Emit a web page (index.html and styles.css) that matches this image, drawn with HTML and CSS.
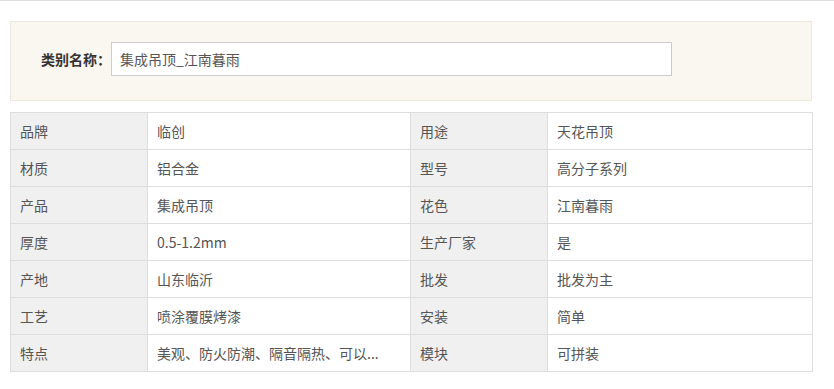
FILE: index.html
```html
<!DOCTYPE html>
<html lang="zh">
<head>
<meta charset="utf-8">
<link rel="stylesheet" href="styles.css">
</head>
<body>
<div class="topline"></div>
<div class="wrap">
  <div class="panel">
    <span class="panel-label">类别名称：</span>
    <div class="panel-input">集成吊顶_江南暮雨</div>
  </div>
  <table class="attrs">
    <colgroup>
      <col class="c-label"><col class="c-value"><col class="c-label"><col class="c-value2">
    </colgroup>
    <tr><td class="k">品牌</td><td>临创</td><td class="k">用途</td><td>天花吊顶</td></tr>
    <tr><td class="k">材质</td><td>铝合金</td><td class="k">型号</td><td>高分子系列</td></tr>
    <tr><td class="k">产品</td><td>集成吊顶</td><td class="k">花色</td><td>江南暮雨</td></tr>
    <tr><td class="k">厚度</td><td>0.5-1.2mm</td><td class="k">生产厂家</td><td>是</td></tr>
    <tr><td class="k">产地</td><td>山东临沂</td><td class="k">批发</td><td>批发为主</td></tr>
    <tr><td class="k">工艺</td><td>喷涂覆膜烤漆</td><td class="k">安装</td><td>简单</td></tr>
    <tr><td class="k">特点</td><td>美观、防火防潮、隔音隔热、可以...</td><td class="k">模块</td><td>可拼装</td></tr>
  </table>
</div>
</body>
</html>
```

FILE: styles.css
```css
html, body {
  margin: 0;
  padding: 0;
  background: #fff;
  font-family: "Noto Sans CJK SC", "Microsoft YaHei", sans-serif;
  font-size: 14px;
  color: #555;
}
.topline {
  height: 1px;
  background: #ddd;
}
.wrap {
  width: 802px;
  margin: 20px 0 0 10px;
}
.panel {
  box-sizing: border-box;
  height: 80px;
  border: 1px solid #ece9e1;
  background: #faf7f0;
  display: flex;
  align-items: center;
  padding: 0 30px 4px 30px;
}
.panel-label {
  width: 70px;
  font-weight: bold;
  color: #333;
  white-space: nowrap;
}
.panel-input {
  box-sizing: border-box;
  width: 561px;
  height: 34px;
  border: 1px solid #ccc;
  background: #fff;
  display: flex;
  align-items: center;
  padding: 0 8px;
  color: #555;
}
.attrs {
  margin-top: 11px;
  width: 802px;
  border-collapse: collapse;
  table-layout: fixed;
}
.c-label { width: 137px; }
.c-value { width: 263px; }
.c-value2 { width: 265px; }
.attrs td {
  border: 1px solid #ddd;
  height: 37px;
  box-sizing: border-box;
  padding: 0 9px;
  line-height: 18px;
  white-space: nowrap;
  overflow: hidden;
  color: #555;
}
.attrs td.k {
  background: #f0f0f0;
}
```
